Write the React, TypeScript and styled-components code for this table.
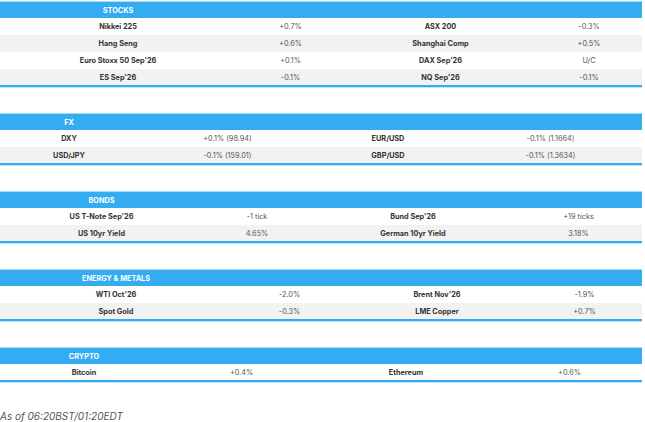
import styled, { createGlobalStyle } from "styled-components";

const GlobalStyle = createGlobalStyle`
  html, body {
    margin: 0;
    padding: 0;
    background: #ffffff;
  }
  body {
    font-family: Inter, "Noto Sans", "Liberation Sans", sans-serif;
  }
`;

const Page = styled.div`
  width: 642px;
  padding-top: 1px;
  display: flex;
  flex-direction: column;
  gap: 26px;
`;

const Table = styled.table`
  width: 642px;
  table-layout: fixed;
  border-collapse: collapse;
  border-top: 1px solid #a6daf8;
  border-bottom: 2px solid #33acf2;
  box-shadow: 0 1px 0 #bfe4fb;
  font-size: 7.3px;
`;

const HeaderCell = styled.th`
  height: 16px;
  padding: 0;
  background: #33acf2;
  color: #ffffff;
  font-weight: 700;
  text-transform: uppercase;
  text-align: center;
`;

const Row = styled.tr<{ $shaded: boolean }>`
  height: 17px;
  background: ${(p) => (p.$shaded ? "#f2f2f2" : "#ffffff")};
`;

const NameCell = styled.td`
  padding: 0;
  text-align: center;
  font-weight: 700;
  color: #333333;
`;

const ValueCell = styled.td`
  padding: 0;
  text-align: center;
  font-weight: 400;
  color: #555555;
`;

const Footnote = styled.div`
  margin-top: 2px;
  font-size: 10px;
  font-style: italic;
  color: #555555;
`;

type Block = {
  title: string;
  widths: number[];
  rows: string[][];
};

const blocks: Block[] = [
  {
    title: "Stocks",
    widths: [236, 109, 191, 106],
    rows: [
      ["Nikkei 225", "+0.7%", "ASX 200", "-0.3%"],
      ["Hang Seng", "+0.6%", "Shanghai Comp", "+0.5%"],
      ["Euro Stoxx 50 Sep'26", "+0.1%", "DAX Sep'26", "U/C"],
      ["ES Sep'26", "-0.1%", "NQ Sep'26", "-0.1%"],
    ],
  },
  {
    title: "FX",
    widths: [138, 179, 142, 183],
    rows: [
      ["DXY", "+0.1% (98.94)", "EUR/USD", "-0.1% (1.1664)"],
      ["USD/JPY", "-0.1% (159.01)", "GBP/USD", "-0.1% (1.3634)"],
    ],
  },
  {
    title: "Bonds",
    widths: [203, 108, 204, 127],
    rows: [
      ["US T-Note Sep'26", "-1 tick", "Bund Sep'26", "+19 ticks"],
      ["US 10yr Yield", "4.65%", "German 10yr Yield", "3.18%"],
    ],
  },
  {
    title: "Energy & Metals",
    widths: [232, 115, 180, 115],
    rows: [
      ["WTI Oct'26", "-2.0%", "Brent Nov'26", "-1.9%"],
      ["Spot Gold", "-0.3%", "LME Copper", "+0.7%"],
    ],
  },
  {
    title: "Crypto",
    widths: [168, 147, 182, 145],
    rows: [["Bitcoin", "+0.4%", "Ethereum", "+0.6%"]],
  },
];

function MarketTable({ block }: { block: Block }) {
  return (
    <Table>
      <colgroup>
        {block.widths.map((w, i) => (
          <col key={i} style={{ width: w }} />
        ))}
      </colgroup>
      <thead>
        <tr>
          <HeaderCell>{block.title}</HeaderCell>
          <HeaderCell />
          <HeaderCell />
          <HeaderCell />
        </tr>
      </thead>
      <tbody>
        {block.rows.map((r, i) => (
          <Row key={i} $shaded={i % 2 === 1}>
            <NameCell>{r[0]}</NameCell>
            <ValueCell>{r[1]}</ValueCell>
            <NameCell>{r[2]}</NameCell>
            <ValueCell>{r[3]}</ValueCell>
          </Row>
        ))}
      </tbody>
    </Table>
  );
}

export default function App() {
  return (
    <>
      <GlobalStyle />
      <Page>
        {blocks.map((b) => (
          <MarketTable key={b.title} block={b} />
        ))}
        <Footnote>As of 06:20BST/01:20EDT</Footnote>
      </Page>
    </>
  );
}
